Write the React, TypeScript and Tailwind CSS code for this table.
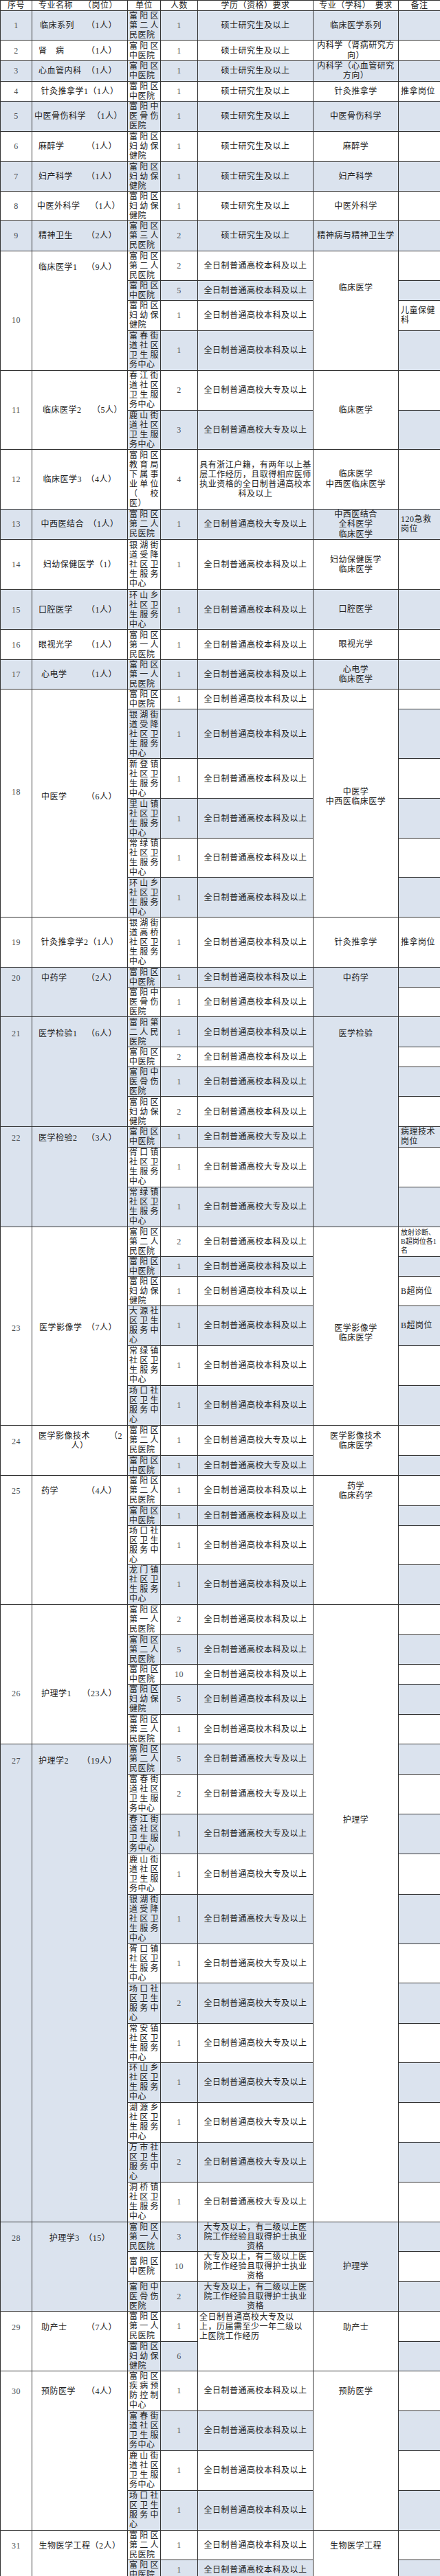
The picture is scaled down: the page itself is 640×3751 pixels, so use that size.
import React from "react";

const S = "硕士研究生及以上";
const BK = "全日制普通高校本科及以上";
const DZ = "全日制普通高校大专及以上";
const MK = "全日制普通高校木科及以上";
const HL = ["大专及以上，有二级以上医", "院工作经验且取得护士执业", "资格"];
const T12 = ["具有浙江户籍，有两年以上基", "层工作经历，且取得相应医师", "执业资格的全日制普通高校本", "科及以上"];

const U1 = "富阳区第一人民医院";
const U2 = "富阳区第二人民医院";
const U3 = "富阳区第三人民医院";
const ZY = "富阳区中医院";
const GS = "富阳中医骨伤医院";
const FY = "富阳区妇幼保健院";
const FC = "富春街道社区卫生服务中心";
const CJ = "春江街道社区卫生服务中心";
const LS = "鹿山街道社区卫生服务中心";
const YH = "银湖街道受降社区卫生服务中心";
const XK = "胥口镇社区卫生服务中心";
const CL = "常绿镇社区卫生服务中心";
const HS = "环山乡社区卫生服务中心";
const CK = "场口社区卫生服务中心";

type Sub = { u: string; n: string; e?: string | string[]; h: number; note?: string[]; small?: boolean };
type Name = { a: string; b?: string; c?: string; pl?: number; pr?: number; center?: boolean; wrap?: boolean };
type Group = {
  no: string;
  name: Name;
  major?: string[];
  majorSpan?: number;
  skipMajor?: boolean;
  noPt?: number;
  namePt?: number;
  majorPt?: number;
  eduMerge?: { lines: string[]; pt: number };
  subs: Sub[];
};

const H: Record<number, string> = {
  15: "h-[15px]",
  28: "h-[28px]",
  29: "h-[29px]",
  30: "h-[30px]",
  42: "h-[42px]",
  43: "h-[43px]",
  44: "h-[44px]",
  57: "h-[57px]",
  58: "h-[58px]",
  59: "h-[59px]",
  72: "h-[72px]",
  73: "h-[73px]",
  87: "h-[87px]",
};
const PT: Record<number, string> = {
  1: "pt-[1px]",
  8: "pt-[8px]",
  9: "pt-[9px]",
  15: "pt-[15px]",
  16: "pt-[16px]",
  17: "pt-[17px]",
  22: "pt-[22px]",
  46: "pt-[46px]",
  93: "pt-[93px]",
  122: "pt-[122px]",
  139: "pt-[139px]",
  140: "pt-[140px]",
  142: "pt-[142px]",
  149: "pt-[149px]",
  306: "pt-[306px]",
};
const PL: Record<number, string> = {
  3: "pl-[3px]",
  7: "pl-[7px]",
  9: "pl-[9px]",
  10: "pl-[10px]",
  11: "pl-[11px]",
  13: "pl-[13px]",
  15: "pl-[15px]",
};
const PR: Record<number, string> = {
  7: "pr-[7px]",
  10: "pr-[10px]",
  14: "pr-[14px]",
  15: "pr-[15px]",
};

const groups: Group[] = [
  { no: "1", name: { a: "临床系列", b: "（1人）", pl: 11 }, major: ["临床医学系列"], subs: [{ u: U2, n: "1", e: S, h: 42 }] },
  { no: "2", name: { a: "肾　病", b: "（1人）", pl: 9 }, major: ["内科学（肾病研究方", "向）"], subs: [{ u: ZY, n: "1", e: S, h: 30 }] },
  { no: "3", name: { a: "心血管内科", b: "（1人）", pl: 9 }, major: ["内科学（心血管研究", "方向）"], subs: [{ u: ZY, n: "1", e: S, h: 29 }] },
  { no: "4", name: { a: "针灸推拿学1（1人）", center: true }, major: ["针灸推拿学"], subs: [{ u: ZY, n: "1", e: S, h: 28, note: ["推拿岗位"] }] },
  { no: "5", name: { a: "中医骨伤科学", b: "（1人）", pl: 3, pr: 7 }, major: ["中医骨伤科学"], subs: [{ u: GS, n: "1", e: S, h: 44 }] },
  { no: "6", name: { a: "麻醉学", b: "（1人）", pl: 9 }, major: ["麻醉学"], subs: [{ u: FY, n: "1", e: S, h: 44 }] },
  { no: "7", name: { a: "妇产科学", b: "（1人）", pl: 9 }, major: ["妇产科学"], subs: [{ u: FY, n: "1", e: S, h: 43 }] },
  { no: "8", name: { a: "中医外科学", b: "（1人）", pl: 7, pr: 10 }, major: ["中医外科学"], subs: [{ u: FY, n: "1", e: S, h: 43 }] },
  { no: "9", name: { a: "精神卫生", b: "（2人）", pl: 9 }, major: ["精神病与精神卫生学"], subs: [{ u: U3, n: "2", e: S, h: 44 }] },
  {
    no: "10",
    name: { a: "临床医学1", b: "（9人）", pl: 9 },
    major: ["临床医学"],
    noPt: 93,
    namePt: 16,
    majorPt: 46,
    subs: [
      { u: U2, n: "2", e: BK, h: 43 },
      { u: ZY, n: "5", e: BK, h: 29 },
      { u: FY, n: "1", e: BK, h: 44, note: ["儿童保健", "科"] },
      { u: FC, n: "1", e: BK, h: 58 },
    ],
  },
  {
    no: "11",
    name: { a: "临床医学2", b: "（5人）", pl: 15, pr: 7 },
    major: ["临床医学"],
    subs: [
      { u: CJ, n: "2", e: DZ, h: 58 },
      { u: LS, n: "3", e: DZ, h: 57 },
    ],
  },
  { no: "12", name: { a: "临床医学3　（4人）", center: true }, major: ["临床医学", "中西医临床医学"], subs: [{ u: "富阳区教育局下属事业单位（校医）", n: "4", e: T12, h: 87 }] },
  { no: "13", name: { a: "中西医结合　（1人）", center: true }, major: ["中西医结合", "全科医学", "临床医学"], subs: [{ u: U2, n: "1", e: DZ, h: 43, note: ["120急救", "岗位"] }] },
  { no: "14", name: { a: "妇幼保健医学（1）", center: true }, major: ["妇幼保健医学", "临床医学"], subs: [{ u: YH, n: "1", e: BK, h: 73 }] },
  { no: "15", name: { a: "口腔医学", b: "（1人）", pl: 9 }, major: ["口腔医学"], subs: [{ u: HS, n: "1", e: BK, h: 58 }] },
  { no: "16", name: { a: "眼视光学", b: "（1人）", pl: 9 }, major: ["眼视光学"], subs: [{ u: U1, n: "1", e: BK, h: 44 }] },
  { no: "17", name: { a: "心电学", b: "（1人）", pl: 13 }, major: ["心电学", "临床医学"], subs: [{ u: U1, n: "1", e: BK, h: 43 }] },
  {
    no: "18",
    name: { a: "中医学", b: "（6人）", pl: 13 },
    major: ["中医学", "中西医临床医学"],
    noPt: 142,
    namePt: 149,
    majorPt: 142,
    subs: [
      { u: ZY, n: "1", e: BK, h: 29 },
      { u: YH, n: "1", e: BK, h: 72 },
      { u: "新登镇社区卫生服务中心", n: "1", e: BK, h: 58 },
      { u: "里山镇社区卫生服务中心", n: "1", e: BK, h: 58 },
      { u: CL, n: "1", e: BK, h: 57 },
      { u: HS, n: "1", e: BK, h: 58 },
    ],
  },
  { no: "19", name: { a: "针灸推拿学2（1人）", center: true }, major: ["针灸推拿学"], subs: [{ u: "银湖街道高桥社区卫生服务中心", n: "1", e: BK, h: 73, note: ["推拿岗位"] }] },
  {
    no: "20",
    name: { a: "中药学", b: "（2人）", pl: 13 },
    major: ["中药学"],
    noPt: 8,
    namePt: 8,
    majorPt: 8,
    subs: [
      { u: ZY, n: "1", e: BK, h: 29 },
      { u: GS, n: "1", e: BK, h: 43 },
    ],
  },
  {
    no: "21",
    name: { a: "医学检验1", b: "（6人）", pl: 9 },
    major: ["医学检验"],
    majorSpan: 7,
    noPt: 17,
    namePt: 17,
    majorPt: 17,
    subs: [
      { u: "富阳第二人民医院", n: "1", e: BK, h: 44 },
      { u: ZY, n: "2", e: BK, h: 29 },
      { u: GS, n: "1", e: BK, h: 43 },
      { u: FY, n: "2", e: BK, h: 44 },
    ],
  },
  {
    no: "22",
    name: { a: "医学检验2", b: "（3人）", pl: 9 },
    skipMajor: true,
    noPt: 9,
    namePt: 9,
    subs: [
      { u: ZY, n: "1", e: DZ, h: 29, note: ["病理技术", "岗位"] },
      { u: XK, n: "1", e: DZ, h: 58 },
      { u: CL, n: "1", e: DZ, h: 58 },
    ],
  },
  {
    no: "23",
    name: { a: "医学影像学", b: "（7人）", pl: 10 },
    major: ["医学影像学", "临床医学"],
    noPt: 140,
    namePt: 139,
    majorPt: 140,
    subs: [
      { u: U2, n: "2", e: BK, h: 43, note: ["放射诊断、", "B超岗位各1", "名"], small: true },
      { u: ZY, n: "1", e: BK, h: 29 },
      { u: FY, n: "1", e: BK, h: 43, note: ["B超岗位"] },
      { u: "大源社区卫生服务中心", n: "1", e: BK, h: 58, note: ["B超岗位"] },
      { u: CL, n: "1", e: BK, h: 58 },
      { u: CK, n: "1", e: BK, h: 58 },
    ],
  },
  {
    no: "24",
    name: { a: "医学影像技术", b: "（2", c: "人）", wrap: true },
    major: ["医学影像技术", "临床医学"],
    noPt: 16,
    namePt: 8,
    majorPt: 8,
    subs: [
      { u: U2, n: "1", e: DZ, h: 44 },
      { u: ZY, n: "1", e: DZ, h: 29 },
    ],
  },
  {
    no: "25",
    name: { a: "药学", b: "（4人）", pl: 13 },
    major: ["药学", "临床药学"],
    noPt: 15,
    namePt: 15,
    majorPt: 8,
    subs: [
      { u: U2, n: "1", e: BK, h: 44 },
      { u: ZY, n: "1", e: BK, h: 29 },
      { u: CK, n: "1", e: BK, h: 57 },
      { u: "龙门镇社区卫生服务中心", n: "1", e: BK, h: 58 },
    ],
  },
  {
    no: "26",
    name: { a: "护理学1", b: "（23人）", pl: 13 },
    major: ["护理学"],
    majorSpan: 17,
    noPt: 122,
    namePt: 122,
    majorPt: 306,
    subs: [
      { u: U1, n: "2", e: BK, h: 44 },
      { u: U2, n: "5", e: BK, h: 43 },
      { u: ZY, n: "10", e: BK, h: 29 },
      { u: FY, n: "5", e: BK, h: 44 },
      { u: U3, n: "1", e: MK, h: 42 },
    ],
  },
  {
    no: "27",
    name: { a: "护理学2", b: "（19人）", pl: 9 },
    skipMajor: true,
    noPt: 17,
    namePt: 17,
    subs: [
      { u: U2, n: "5", e: DZ, h: 44 },
      { u: FC, n: "2", e: DZ, h: 58 },
      { u: CJ, n: "1", e: DZ, h: 58 },
      { u: LS, n: "1", e: DZ, h: 59 },
      { u: YH, n: "1", e: DZ, h: 72 },
      { u: XK, n: "1", e: DZ, h: 57 },
      { u: CK, n: "2", e: DZ, h: 59 },
      { u: "常安镇社区卫生服务中心", n: "1", e: DZ, h: 57 },
      { u: HS, n: "1", e: DZ, h: 58 },
      { u: "湖源乡社区卫生服务中心", n: "1", e: DZ, h: 58 },
      { u: "万市社区卫生服务中心", n: "2", e: DZ, h: 58 },
      { u: "洞桥镇社区卫生服务中心", n: "1", e: DZ, h: 58 },
    ],
  },
  {
    no: "28",
    name: { a: "护理学3　（15）", center: true },
    major: ["护理学"],
    noPt: 16,
    namePt: 16,
    subs: [
      { u: U1, n: "3", e: HL, h: 43 },
      { u: ZY, n: "10", e: HL, h: 44 },
      { u: GS, n: "2", e: HL, h: 43 },
    ],
  },
  {
    no: "29",
    name: { a: "助产士", b: "（7人）", pl: 13 },
    major: ["助产士"],
    noPt: 16,
    namePt: 16,
    majorPt: 16,
    eduMerge: { lines: ["全日制普通高校大专及以", "上，历届需至少一年二级以", "上医院工作经历"], pt: 1 },
    subs: [
      { u: U1, n: "1", h: 44 },
      { u: FY, n: "6", h: 43 },
    ],
  },
  {
    no: "30",
    name: { a: "预防医学", b: "（4人）", pl: 13 },
    major: ["预防医学"],
    noPt: 22,
    namePt: 22,
    majorPt: 22,
    subs: [
      { u: "富阳区疾病预防控制中心", n: "1", e: BK, h: 58 },
      { u: FC, n: "1", e: BK, h: 58 },
      { u: LS, n: "1", e: BK, h: 58 },
      { u: CK, n: "1", e: BK, h: 58 },
    ],
  },
  {
    no: "31",
    name: { a: "生物医学工程（2人）", center: true },
    major: ["生物医学工程"],
    noPt: 15,
    namePt: 15,
    majorPt: 15,
    subs: [
      { u: U2, n: "1", e: BK, h: 43 },
      { u: ZY, n: "1", e: BK, h: 30 },
    ],
  },
];

const BLUE = "bg-[#dbe3ee]";
const WHITE = "bg-white";
const BD = "border border-[#333333] p-0";

function Lines({ lines }: { lines: string[] }) {
  return (
    <>
      {lines.map((l, i) => (
        <div key={i} className="whitespace-nowrap">
          {l}
        </div>
      ))}
    </>
  );
}

function NameBody({ n }: { n: Name }) {
  if (n.wrap) {
    return (
      <div className="flex flex-col">
        <div className="flex justify-between pl-[9px] pr-[7px]">
          <span>{n.a}</span>
          <span>{n.b}</span>
        </div>
        <div className="text-center">{n.c}</div>
      </div>
    );
  }
  if (n.center || !n.b) {
    return <div className="text-center whitespace-nowrap">{n.a}</div>;
  }
  return (
    <div className={`flex justify-between whitespace-nowrap ${PL[n.pl ?? 9]} ${PR[n.pr ?? 15]}`}>
      <span>{n.a}</span>
      <span>{n.b}</span>
    </div>
  );
}

function va(pt?: number) {
  return pt !== undefined ? `align-top ${PT[pt]}` : "align-middle";
}

export default function App() {
  let idx = 0;
  const rows: React.ReactNode[] = [];
  groups.forEach((g, gi) => {
    const gBg = idx % 2 === 0 ? BLUE : WHITE;
    const span = g.subs.length;
    g.subs.forEach((s, i) => {
      const bg = idx % 2 === 0 ? BLUE : WHITE;
      const edu = s.e;
      rows.push(
        <tr key={`${gi}-${i}`} className={H[s.h]}>
          {i === 0 && (
            <td rowSpan={span} className={`${BD} ${gBg} ${va(g.noPt)} text-center text-[#4d4d4d]`}>
              {g.no}
            </td>
          )}
          {i === 0 && (
            <td rowSpan={span} className={`${BD} ${gBg} ${va(g.namePt)}`}>
              <NameBody n={g.name} />
            </td>
          )}
          <td className={`${BD} ${bg} align-middle px-[2px] text-justify leading-[14px]`}>{s.u}</td>
          <td className={`${BD} ${bg} align-middle text-center text-[#4d4d4d]`}>{s.n}</td>
          {g.eduMerge ? (
            i === 0 ? (
              <td rowSpan={span} className={`${BD} ${gBg} ${va(g.eduMerge.pt)} pl-[2px] text-left leading-[14px]`}>
                <Lines lines={g.eduMerge.lines} />
              </td>
            ) : null
          ) : (
            <td className={`${BD} ${bg} align-middle text-center leading-[14px]`}>
              {Array.isArray(edu) ? <Lines lines={edu} /> : edu}
            </td>
          )}
          {i === 0 && !g.skipMajor && (
            <td rowSpan={g.majorSpan ?? span} className={`${BD} ${gBg} ${va(g.majorPt)} text-center leading-[14.4px]`}>
              <Lines lines={g.major ?? []} />
            </td>
          )}
          <td className={`${BD} ${bg} align-middle pl-[3px] text-left`}>
            {s.note &&
              (s.small ? (
                <div className="text-[10px] leading-[13px] tracking-[0px]">
                  <Lines lines={s.note} />
                </div>
              ) : (
                <div className="leading-[14.4px]">
                  <Lines lines={s.note} />
                </div>
              ))}
          </td>
        </tr>
      );
      idx++;
    });
  });

  return (
    <div lang="zh-CN" className="w-[640px] bg-white">
      <table className="w-[640px] table-fixed border-collapse font-['Liberation_Serif','Noto_Sans_CJK_SC',serif] text-[12px] leading-[14px] tracking-[0.5px] text-[#222222]">
        <colgroup>
          <col className="w-[46px]" />
          <col className="w-[139px]" />
          <col className="w-[48px]" />
          <col className="w-[54px]" />
          <col className="w-[168px]" />
          <col className="w-[124px]" />
          <col className="w-[61px]" />
        </colgroup>
        <thead>
          <tr className="h-[15px]">
            <th className={`${BD} bg-white font-normal text-center align-bottom`}>序号</th>
            <th className={`${BD} bg-white font-normal align-bottom`}>
              <div className="flex justify-between pl-[9px] pr-[14px]">
                <span>专业名称</span>
                <span>（岗位）</span>
              </div>
            </th>
            <th className={`${BD} bg-white font-normal text-center align-bottom`}>单位</th>
            <th className={`${BD} bg-white font-normal text-center align-bottom`}>人数</th>
            <th className={`${BD} bg-white font-normal text-center align-bottom`}>学历（资格）要求</th>
            <th className={`${BD} bg-white font-normal text-center align-bottom whitespace-nowrap`}>专业（学科）　要求</th>
            <th className={`${BD} bg-white font-normal text-center align-bottom`}>备注</th>
          </tr>
        </thead>
        <tbody>{rows}</tbody>
      </table>
    </div>
  );
}
